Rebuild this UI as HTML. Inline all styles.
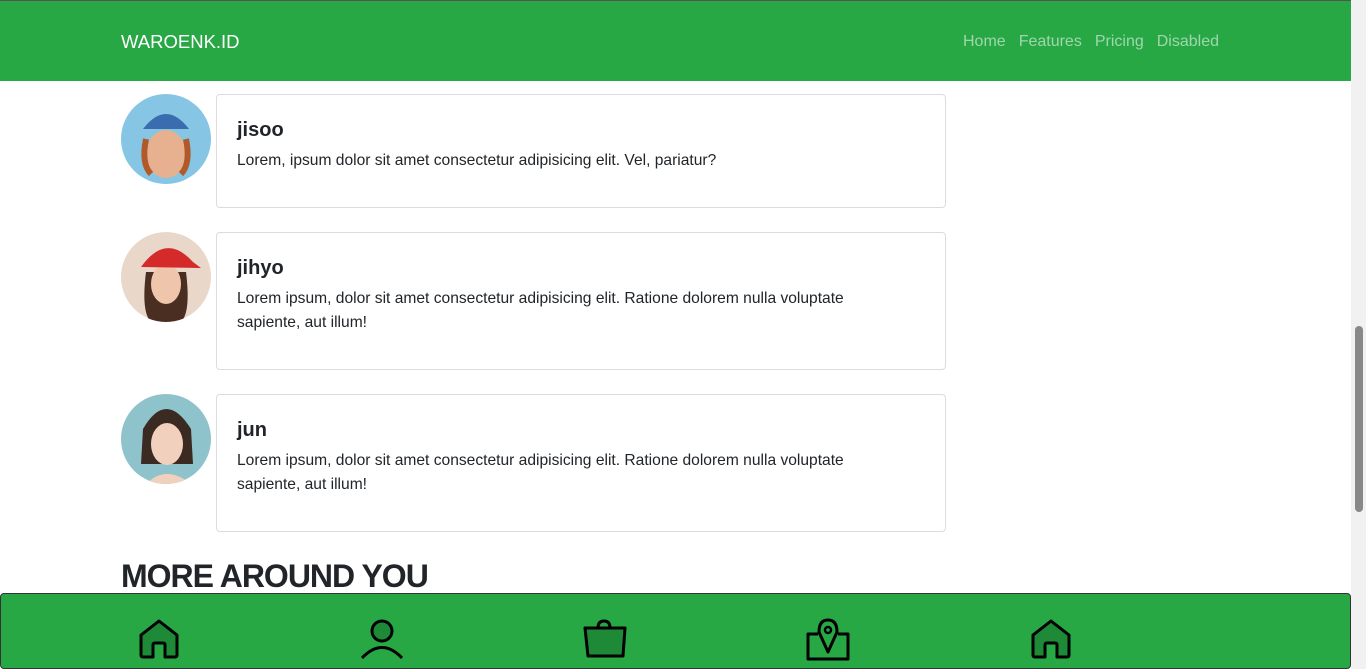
<!DOCTYPE html>
<html><head><meta charset="utf-8"><style>
*{box-sizing:border-box;margin:0;padding:0}
body{width:1366px;height:669px;overflow:hidden;background:#fff;font-family:"Liberation Sans",sans-serif;color:#212529;position:relative}
.nav{position:absolute;left:0;top:0;width:1351px;height:81px;background:#28a745;border-top:1px solid #555}
.brand{position:absolute;left:121px;top:30px;color:#fff;font-size:18.5px}
.links{position:absolute;left:963px;top:32px;font-size:16px;color:rgba(255,255,255,.55)}
.links span{margin-right:13px}
.av{position:absolute;left:121px;width:90px;height:90px;border-radius:50%;overflow:hidden}
.card{position:absolute;left:216px;width:730px;border:1px solid #dcdcdc;border-radius:4px;padding:24px 20px}
.card h5{font-size:20px;font-weight:600;margin-bottom:7px}
.card p{font-size:15.6px;line-height:24px;width:640px}
h2{position:absolute;left:121px;top:558px;font-size:32px;font-weight:700;letter-spacing:-1px}
.bar{position:absolute;left:0;top:593px;width:1351px;height:76px;background:#28a745;border:1px solid #333;border-radius:4px}
.bar svg{position:absolute}
.sb{position:absolute;left:1351px;top:0;width:15px;height:669px;background:#f1f1f1}
.sb div{position:absolute;left:4px;top:326px;width:8px;height:186px;background:#888;border-radius:4px}
</style></head><body>
<div class="nav"><div class="brand">WAROENK.ID</div><div class="links"><span>Home</span><span>Features</span><span>Pricing</span><span>Disabled</span></div></div>

<div class="av" style="top:94px;background:#86c6e4"><svg width="90" height="90"><ellipse cx="45" cy="60" rx="20" ry="24" fill="#e7b08f"/><path d="M22 35 Q45 5 68 35 Z" fill="#3a6cb0"/><path d="M25 45 Q20 70 30 80 M65 45 Q70 70 60 80" stroke="#b05a2a" stroke-width="6" fill="none"/></svg></div>
<div class="card" style="top:94px;height:114px"><h5>jisoo</h5><p>Lorem, ipsum dolor sit amet consectetur adipisicing elit. Vel, pariatur?</p></div>

<div class="av" style="top:232px;background:#e9d8c9"><svg width="90" height="90"><path d="M25 40 Q20 80 30 90 L60 90 Q70 80 65 40Z" fill="#4a2e22"/><ellipse cx="45" cy="52" rx="15" ry="20" fill="#efc6ac"/><path d="M20 35 Q45 0 72 30 L80 36 Z" fill="#d42a2a"/></svg></div>
<div class="card" style="top:232px;height:138px"><h5>jihyo</h5><p>Lorem ipsum, dolor sit amet consectetur adipisicing elit. Ratione dolorem nulla voluptate sapiente, aut illum!</p></div>

<div class="av" style="top:394px;background:#8fc3cc"><svg width="90" height="90"><path d="M22 35 Q45 -5 70 35 L72 70 L20 70Z" fill="#3b2a22"/><ellipse cx="46" cy="50" rx="16" ry="21" fill="#f1d1bd"/><path d="M25 90 Q45 70 70 90Z" fill="#f1d1bd"/></svg></div>
<div class="card" style="top:394px;height:138px"><h5>jun</h5><p>Lorem ipsum, dolor sit amet consectetur adipisicing elit. Ratione dolorem nulla voluptate sapiente, aut illum!</p></div>

<h2>MORE AROUND YOU</h2>

<div class="bar">
<svg style="left:138px;top:25px" width="40" height="40" viewBox="0 0 40 40"><path d="M2 16 L20 2 L38 16 V36 Q38 38 36 38 H26 V26 Q26 24 24 24 H16 Q14 24 14 26 V38 H4 Q2 38 2 36 Z" fill="#1e8a38" stroke="#000" stroke-width="3" stroke-linejoin="round"/></svg>
<svg style="left:360px;top:25px" width="42" height="42" viewBox="0 0 42 42"><circle cx="21" cy="12" r="10" fill="#1e8a38" stroke="#000" stroke-width="3"/><path d="M1 39 Q21 18 41 39" fill="none" stroke="#000" stroke-width="3"/></svg>
<svg style="left:581px;top:25px" width="46" height="40" viewBox="0 0 46 40"><path d="M16 9 Q16 2 22 2 Q28 2 28 9" fill="none" stroke="#000" stroke-width="3"/><path d="M3 9 H43 L41 37 H6 Z" fill="#1e8a38" stroke="#000" stroke-width="3" stroke-linejoin="round"/></svg>
<svg style="left:804px;top:24px" width="46" height="44" viewBox="0 0 46 44"><path d="M13 16 H3 V41 H43 V16 H33" fill="none" stroke="#000" stroke-width="3" stroke-linejoin="round"/><path d="M23 34 L14 14 Q14 2 23 2 Q32 2 32 14 Z" fill="none" stroke="#000" stroke-width="3" stroke-linejoin="round"/><circle cx="23" cy="12" r="3" fill="none" stroke="#000" stroke-width="2.5"/></svg>
<svg style="left:1030px;top:25px" width="40" height="40" viewBox="0 0 40 40"><path d="M2 16 L20 2 L38 16 V36 Q38 38 36 38 H26 V26 Q26 24 24 24 H16 Q14 24 14 26 V38 H4 Q2 38 2 36 Z" fill="#1e8a38" stroke="#000" stroke-width="3" stroke-linejoin="round"/></svg>
</div>
<div class="sb"><div></div></div>
</body></html>
